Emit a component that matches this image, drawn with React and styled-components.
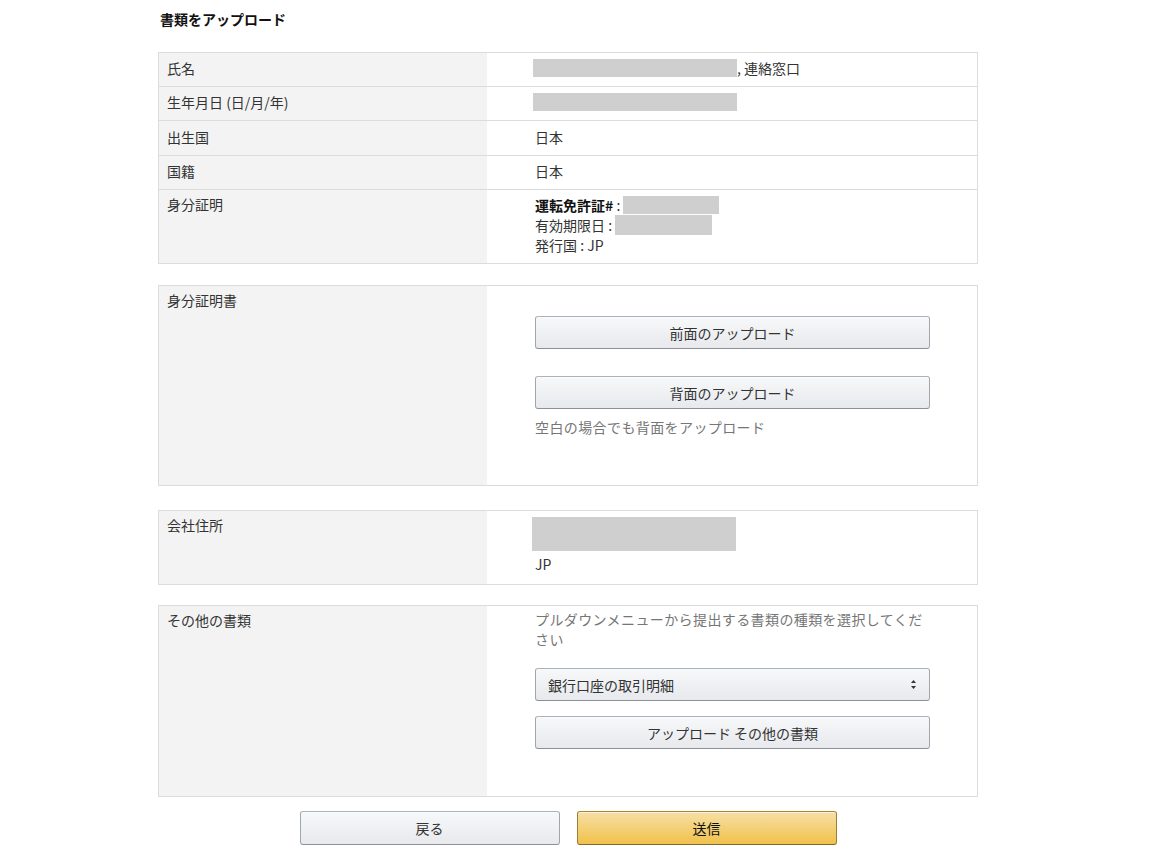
import React from 'react';
import styled, { createGlobalStyle } from 'styled-components';

const GlobalStyle = createGlobalStyle`
    body {
        margin: 0;
        background: #fff;
        font-family: "Noto Sans CJK JP", "Liberation Sans", sans-serif;
        font-size: 14px;
        color: #333;
    }
`;

const Page = styled.div`
    width: 820px;
    margin-left: 158px;
    padding-top: 9px;
`;

const Title = styled.h1`
    margin: 0 0 23px 2px;
    font-size: 14px;
    font-weight: 700;
    line-height: 20px;
    color: #111;
`;

const Section = styled.section`
    border: 1px solid #dcdcdc;
    margin-bottom: ${(p) => p.$gap || 20}px;
`;

const Row = styled.div`
    display: grid;
    grid-template-columns: 328px 1fr;
    min-height: ${(p) => p.$h || 33}px;
    & + & {
        border-top: 1px solid #dcdcdc;
    }
`;

const Label = styled.div`
    background: #f3f3f3;
    padding: ${(p) => (p.$top ? '4px 8px' : '0 8px 3px')};
    display: flex;
    align-items: ${(p) => (p.$top ? 'flex-start' : 'center')};
    line-height: 20px;
`;

const Value = styled.div`
    padding: ${(p) => p.$pad || '0 0 3px'};
    padding-left: 48px;
    padding-right: 47px;
    display: flex;
    flex-direction: column;
    justify-content: ${(p) => (p.$center ? 'center' : 'flex-start')};
    line-height: 20px;
`;

const Line = styled.div`
    display: flex;
    align-items: center;
`;

const Redact = styled.span`
    display: inline-block;
    background: #d0cfd0;
    width: ${(p) => p.$w}px;
    height: ${(p) => p.$h || 18}px;
    margin-left: ${(p) => p.$ml || 0}px;
`;

const Bold = styled.b`
    font-weight: 700;
    color: #111;
`;

const Button = styled.button`
    display: block;
    width: ${(p) => p.$w || 395}px;
    height: ${(p) => p.$h || 33}px;
    margin: ${(p) => p.$m || 0};
    border: 1px solid;
    border-color: #adb1b8 #a2a6ac #8d9096;
    border-radius: 3px;
    background: linear-gradient(to bottom, #f7f8fa, #e7e9ec);
    box-shadow: 0 1px 0 rgba(255, 255, 255, 0.6) inset;
    font-family: inherit;
    font-size: 14px;
    color: #333;
    cursor: pointer;
`;

const PrimaryButton = styled(Button)`
    border-color: #a88734 #9c7e31 #846a29;
    background: linear-gradient(to bottom, #f7dfa5, #f0c14b);
    color: #111;
`;

const Help = styled.div`
    color: #767676;
    line-height: 20px;
    letter-spacing: 0.4px;
    margin-top: ${(p) => p.$mt || 0}px;
`;

const Select = styled.div`
    width: 395px;
    height: 33px;
    box-sizing: border-box;
    margin-top: 19px;
    padding: 0 12px 0 12px;
    display: flex;
    align-items: center;
    justify-content: space-between;
    border: 1px solid;
    border-color: #adb1b8 #a2a6ac #8d9096;
    border-radius: 3px;
    background: linear-gradient(to bottom, #f7f8fa, #e7e9ec);
    color: #333;
`;

const Footer = styled.div`
    display: flex;
    justify-content: center;
    gap: 17px;
    margin-top: -6px;
`;

const Arrows = () => (
    <svg width="7" height="11" viewBox="0 0 7 11">
        <path d="M3.5 1 L6 4 H1 Z" fill="#333" />
        <path d="M3.5 10 L6 7 H1 Z" fill="#333" />
    </svg>
);

export default function App() {
    return (
        <>
            <GlobalStyle />
            <Page>
                <Title>書類をアップロード</Title>

                <Section $gap={21}>
                    <Row>
                        <Label>氏名</Label>
                        <Value $center>
                            <Line>
                                <Redact $w={204} $ml={-2} />, 連絡窓口
                            </Line>
                        </Value>
                    </Row>
                    <Row>
                        <Label>生年月日 (日/月/年)</Label>
                        <Value $center>
                            <Line>
                                <Redact $w={204} $ml={-2} />
                            </Line>
                        </Value>
                    </Row>
                    <Row $h={34}>
                        <Label>出生国</Label>
                        <Value $center>日本</Value>
                    </Row>
                    <Row>
                        <Label>国籍</Label>
                        <Value $center>日本</Value>
                    </Row>
                    <Row $h={73}>
                        <Label $top>身分証明</Label>
                        <Value $pad="5px 0 6px">
                            <Line>
                                <Bold>運転免許証#</Bold>&nbsp;:&nbsp;
                                <Redact $w={96} />
                            </Line>
                            <Line>
                                有効期限日 :&nbsp;
                                <Redact $w={97} $h={20} />
                            </Line>
                            <Line>発行国 : JP</Line>
                        </Value>
                    </Row>
                </Section>

                <Section $gap={24}>
                    <Row $h={199}>
                        <Label $top>身分証明書</Label>
                        <Value $pad="30px 0 0">
                            <Button>前面のアップロード</Button>
                            <Button $m="27px 0 0">背面のアップロード</Button>
                            <Help $mt={8}>空白の場合でも背面をアップロード</Help>
                        </Value>
                    </Row>
                </Section>

                <Section $gap={20}>
                    <Row $h={73}>
                        <Label $top>会社住所</Label>
                        <Value $pad="6px 0 0">
                            <Redact $w={204} $h={34} $ml={-3} />
                            <div style={{ marginTop: 3 }}>JP</div>
                        </Value>
                    </Row>
                </Section>

                <Section $gap={20}>
                    <Row $h={190}>
                        <Label $top>その他の書類</Label>
                        <Value $pad="3px 0 0">
                            <Help>プルダウンメニューから提出する書類の種類を選択してください</Help>
                            <Select>
                                <span>銀行口座の取引明細</span>
                                <Arrows />
                            </Select>
                            <Button $m="15px 0 0">アップロード その他の書類</Button>
                        </Value>
                    </Row>
                </Section>

                <Footer>
                    <Button $w={260} $h={34}>戻る</Button>
                    <PrimaryButton $w={260} $h={34}>送信</PrimaryButton>
                </Footer>
            </Page>
        </>
    );
}
